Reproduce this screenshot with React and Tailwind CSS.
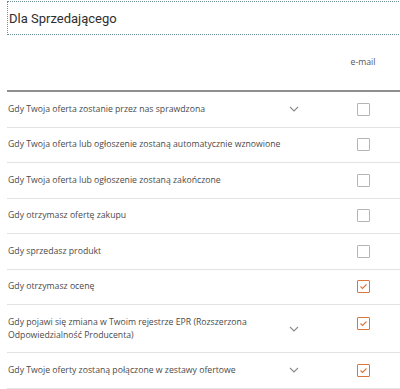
import React from "react";

const rows = [
  { text: "Gdy Twoja oferta zostanie przez nas sprawdzona", chevron: true, checked: false },
  { text: "Gdy Twoja oferta lub ogłoszenie zostaną automatycznie wznowione", checked: false },
  { text: "Gdy Twoja oferta lub ogłoszenie zostaną zakończone", checked: false },
  { text: "Gdy otrzymasz ofertę zakupu", checked: false },
  { text: "Gdy sprzedasz produkt", checked: false },
  { text: "Gdy otrzymasz ocenę", checked: true },
  { text: "Gdy pojawi się zmiana w Twoim rejestrze EPR (Rozszerzona Odpowiedzialność Producenta)", chevron: true, checked: true, tall: true },
  { text: "Gdy Twoje oferty zostaną połączone w zestawy ofertowe", chevron: true, checked: true },
];

function Chevron() {
  return (
    <svg width="10" height="6" viewBox="0 0 10 6" fill="none">
      <path d="M1 1 L5 5 L9 1" stroke="#8a8a8a" strokeWidth="1.1" />
    </svg>
  );
}

function Box({ checked }) {
  if (checked) {
    return (
      <div className="w-[13px] h-[13px] border border-[#d8763c] rounded-[1px] flex items-center justify-center">
        <svg width="9" height="7" viewBox="0 0 9 7" fill="none">
          <path d="M1.5 3.5 L3.5 5.5 L7.5 1.5" stroke="#d8763c" strokeWidth="1.1" />
        </svg>
      </div>
    );
  }
  return <div className="w-[13px] h-[13px] border border-[#b5b5b5] rounded-[1px]" />;
}

export default function App() {
  return (
    <div className="w-[400px] h-[389px] overflow-hidden bg-white pl-[7px]">
      <div className="mt-[1px] h-[34px] w-[420px] border border-dotted border-[#6f8f96] flex items-center pl-[1px]">
        <span className="text-[13px] text-[#2e2e2e] font-['Roboto',sans-serif] leading-none">Dla Sprzedającego</span>
      </div>
      <div className="h-[55px] flex items-center w-[393px]">
        <span className="ml-[333px] w-[46px] text-center text-[8.7px] text-[#555] font-['Open_Sans',sans-serif]">e-mail</span>
      </div>
      <div className="h-[2px] bg-[#8f8f8f] w-[400px]" />
      <div className="font-['Open_Sans',sans-serif] text-[8.7px] text-[#4a4a4a]">
        {rows.map((r, i) => (
          <div
            key={i}
            className={`flex items-center border-b border-[#e3e3e3] w-[400px] ${r.tall ? "h-[48px]" : "h-[35.5px]"}`}
          >
            <div className="w-[280px] pl-[1px] leading-[13px]">{r.text}</div>
            <div className="w-[14px] flex justify-center">{r.chevron ? <Chevron /> : null}</div>
            <div className={`w-[46px] ml-[39.5px] flex justify-center ${r.tall ? "self-start mt-[12px]" : ""}`}>
              <Box checked={r.checked} />
            </div>
          </div>
        ))}
      </div>
    </div>
  );
}
